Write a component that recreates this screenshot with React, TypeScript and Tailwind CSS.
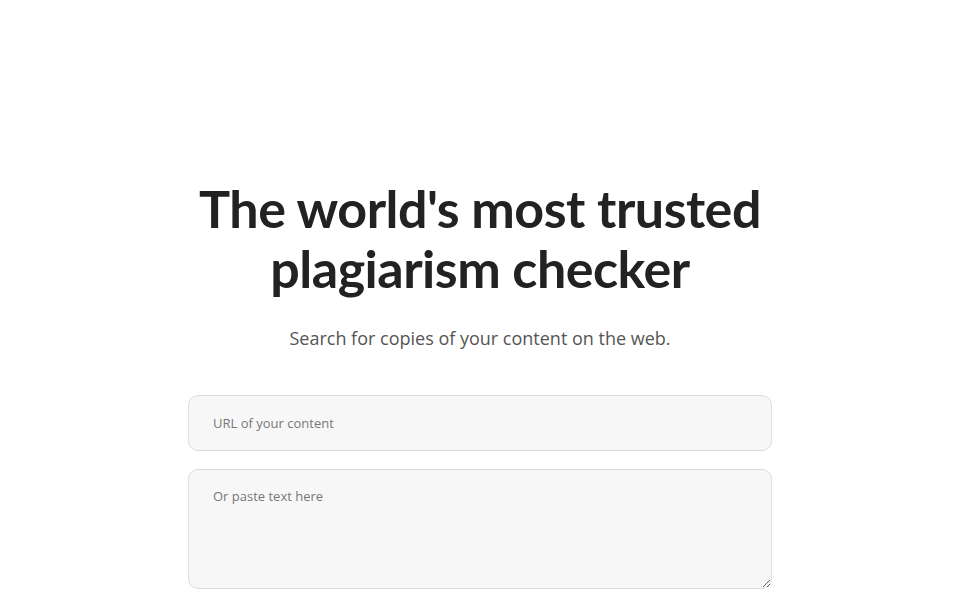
import React from "react";

export default function App() {
  return (
    <div className="min-h-screen bg-white flex flex-col items-center pt-[178px]">
      <h1 className="text-center font-['Lato','Liberation_Sans',sans-serif] text-[52px] leading-[60px] font-bold text-[#222] tracking-[-0.5px]">
        The world's most trusted
        <br />
        plagiarism checker
      </h1>
      <p className="mt-[27px] font-['Open_Sans','Liberation_Sans',sans-serif] text-[18px] leading-[26px] text-[#555]">
        Search for copies of your content on the web.
      </p>
      <div className="mt-[44px] w-[584px] flex flex-col gap-[18px] font-['Open_Sans','Liberation_Sans',sans-serif]">
        <input
          type="text"
          placeholder="URL of your content"
          className="h-[56px] w-full rounded-[10px] border border-[#dcdcdc] bg-[#f7f7f7] px-[24px] text-[13px] text-[#333] placeholder:text-[#777] outline-none"
        />
        <textarea
          placeholder="Or paste text here"
          className="h-[120px] w-full rounded-[10px] border border-[#dcdcdc] bg-[#f7f7f7] px-[24px] pt-[17px] text-[13px] text-[#333] placeholder:text-[#777] outline-none"
        />
      </div>
    </div>
  );
}
